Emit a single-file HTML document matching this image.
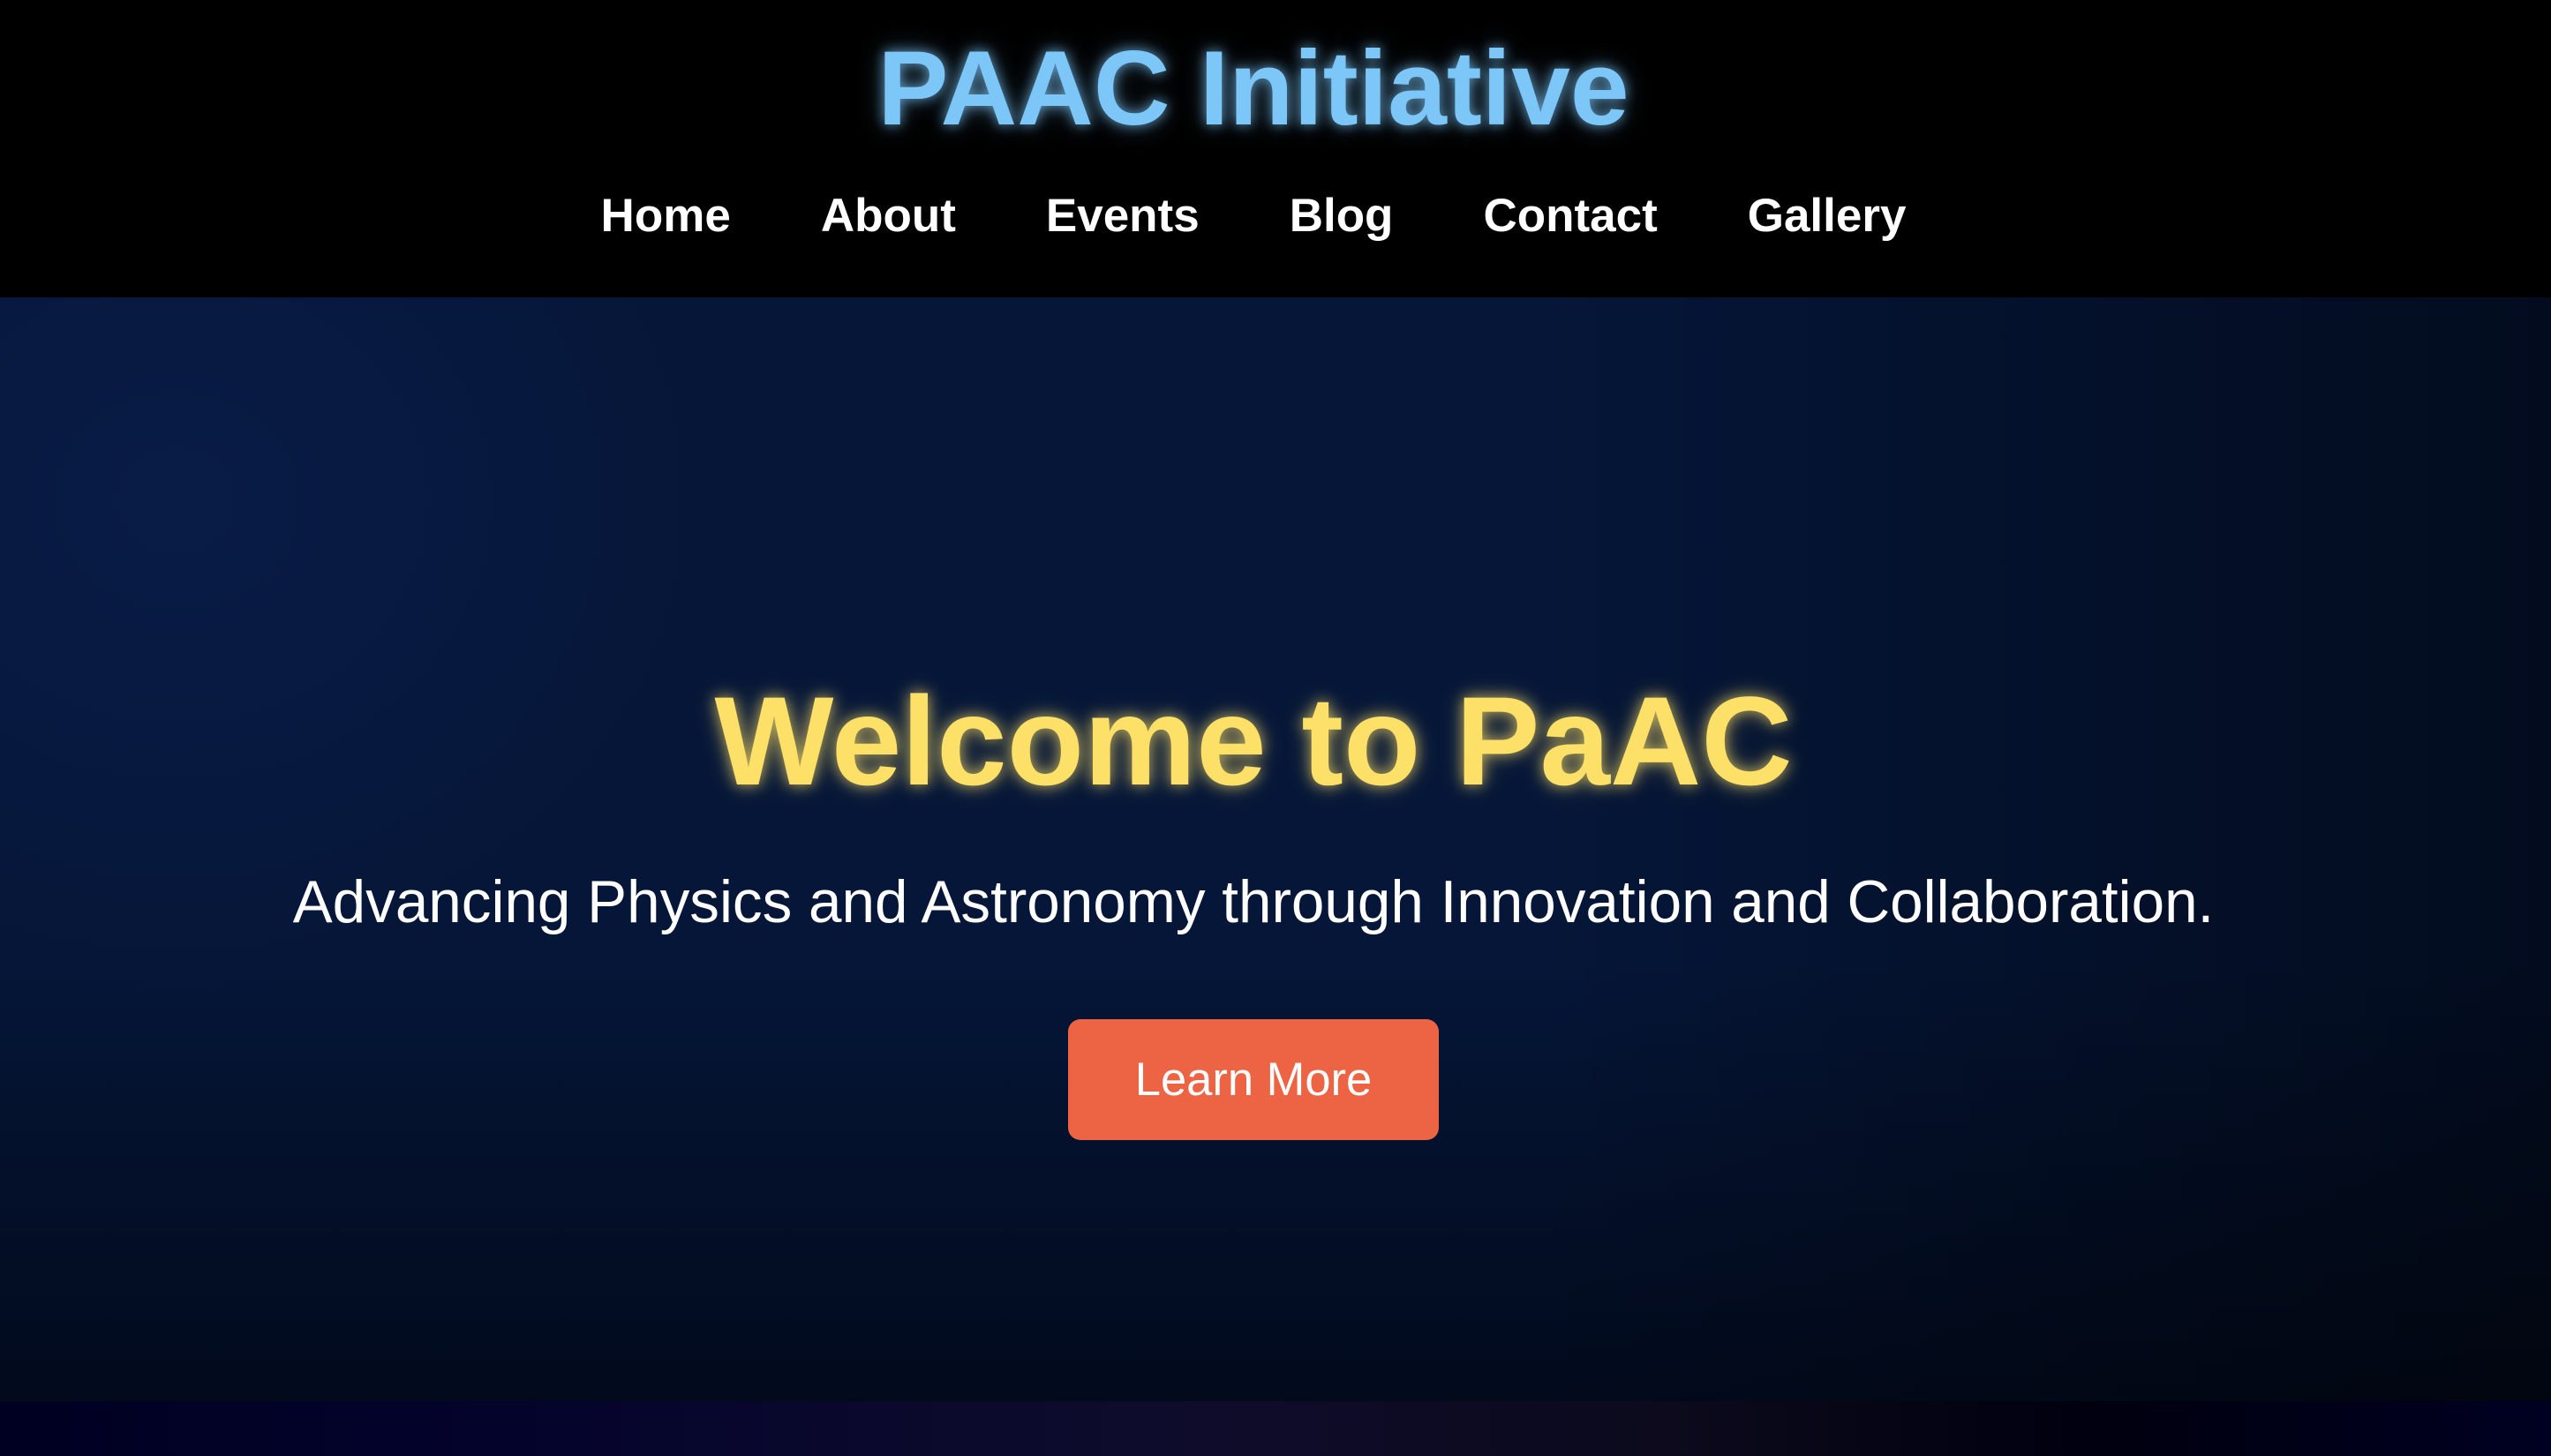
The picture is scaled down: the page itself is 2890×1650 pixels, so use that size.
<!DOCTYPE html>
<html><head><meta charset="utf-8"><style>
html,body{margin:0;padding:0;width:2890px;height:1650px;overflow:hidden;background:#000;font-family:"Liberation Sans",Arial,sans-serif}
.hdr{position:absolute;left:0;top:0;width:2890px;height:337px;background:#000}
.t{position:absolute;left:0;width:2840px;text-align:center;line-height:1;white-space:nowrap}
.title{top:40px;font-size:120px;font-weight:bold;color:#7cc6f8;text-shadow:0 0 14px rgba(124,198,248,.75),0 0 28px rgba(124,198,248,.35)}
.nav{position:absolute;top:218px;left:0;width:2840px;text-align:center;font-size:53px;font-weight:bold;color:#fff;line-height:1;white-space:nowrap}
.nav span{margin:0 51px}
.hero{position:absolute;left:0;top:337px;width:2890px;height:1251px;
background:radial-gradient(ellipse 900px 800px at 200px 230px,rgba(12,32,80,.6) 0%,rgba(6,24,62,0) 70%),linear-gradient(to right,rgba(0,0,0,0) 60%,rgba(0,0,0,.45) 100%),linear-gradient(to bottom,#051638 0%,#051638 60%,#020a1c 100%)}
.h1{top:769px;font-size:143px;font-weight:bold;color:#fde068;text-shadow:0 0 16px rgba(253,224,104,.7),0 0 30px rgba(253,224,104,.3)}
.sub{top:989px;font-size:67.4px;color:#fff}
.btn{position:absolute;left:1210px;top:1155px;width:420px;height:137px;background:#ec6444;border-radius:14px;color:#fff;font-size:52.5px;display:flex;align-items:center;justify-content:center}
.foot{position:absolute;left:0;top:1588px;width:2890px;height:62px;background:linear-gradient(to right,#000022 0%,#04032c 20%,#0e0c2c 45%,#0c0a1c 65%,#00000f 82%,#000022 100%)}
</style></head><body>
<div class="hdr"></div>
<div class="t title">PAAC Initiative</div>
<div class="nav"><span>Home</span><span>About</span><span>Events</span><span>Blog</span><span>Contact</span><span>Gallery</span></div>
<div class="hero"></div>
<div class="t h1">Welcome to PaAC</div>
<div class="t sub">Advancing Physics and Astronomy through Innovation and Collaboration.</div>
<div class="btn">Learn More</div>
<div class="foot"></div>
</body></html>
